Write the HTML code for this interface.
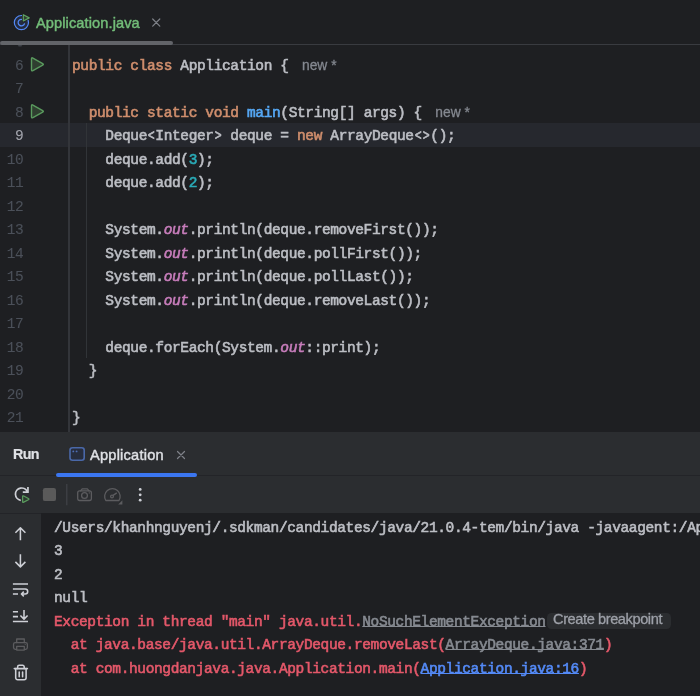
<!DOCTYPE html>
<html>
<head>
<meta charset="utf-8">
<style>
html,body{margin:0;padding:0;}
body{width:700px;height:696px;overflow:hidden;background:#1e1f22;position:relative;font-family:"Liberation Sans",sans-serif;}
.abs{position:absolute;}
#tabborder{left:0;top:44px;width:700px;height:1px;background:#393b40;}
#tabul{left:0px;top:40.5px;width:173.4px;height:4.4px;background:#626469;border-radius:2.2px;}
#tabname{left:36px;top:13.2px;font-size:14.6px;letter-spacing:0.1px;color:#73bd79;line-height:20px;white-space:nowrap;will-change:transform;-webkit-text-stroke:0.45px currentColor;}
#gutsep{left:68.1px;top:45px;width:1.6px;height:387px;background:#33353a;}
#indent{left:86px;top:123px;width:1px;height:235px;background:#313438;}
#caretrow{left:0;top:123px;width:700px;height:23.5px;background:#26282e;}
.mono{will-change:transform;font-family:"Liberation Mono",monospace;font-size:14.5px;letter-spacing:-0.37px;line-height:24px;height:24px;white-space:pre;-webkit-text-stroke:0.6px currentColor;}
.ln{position:absolute;left:0;width:23.4px;text-align:right;color:#4b5059;-webkit-text-stroke:0.1px currentColor;}
.cl{position:absolute;left:72px;color:#bcbec4;}
.ab{display:inline-block;transform:scaleX(0.8);}
.k{color:#cf8e6d;}
.m{color:#56a8f5;}
.n{color:#2aacb8;}
.s{color:#c77dbb;font-style:italic;}
.h{margin-left:13.4px;color:#858991;font-family:"Liberation Sans",sans-serif;font-size:13.8px;letter-spacing:0;-webkit-text-stroke:0.3px currentColor;}
#runpanel{left:0;top:432px;width:700px;height:264px;background:#2b2d30;}
#runborder{left:0;top:475.2px;width:700px;height:1px;background:#232428;}
#console{left:41px;top:512.7px;width:659px;height:184px;background:#1e1f22;}
#runul{left:55.7px;top:472.8px;width:141.4px;height:4px;background:#3b76f1;border-radius:2px;}
.rt{position:absolute;top:444.6px;font-size:14.6px;letter-spacing:0.22px;color:#dfe1e5;line-height:20px;white-space:nowrap;will-change:transform;-webkit-text-stroke:0.4px currentColor;}
#cb{left:546.6px;top:613.2px;width:124px;height:15.7px;background:#2b2d30;border-radius:4.5px;}
#cbt{left:552.9px;top:609.3px;font-size:14.6px;letter-spacing:-0.41px;color:#9da0a8;line-height:20px;white-space:nowrap;will-change:transform;-webkit-text-stroke:0.3px currentColor;}
#conborder{left:0;top:512.6px;width:41px;height:1px;background:#232428;}
svg{position:absolute;left:0;top:0;}
.co{position:absolute;left:53.5px;color:#bcbec4;}
.er{color:#e4586a;}
.lk{color:#548af7;text-decoration:underline;text-decoration-skip-ink:none;text-underline-offset:0.3px;text-decoration-thickness:1.1px;}
.gl{color:#868a91;text-decoration:underline;text-decoration-skip-ink:none;text-underline-offset:0.3px;text-decoration-thickness:1.1px;}
</style>
</head>
<body>
<div class="abs" id="tabborder"></div><div class="abs" id="tabul"></div>
<div class="abs" id="tabname">Application.java</div>
<div class="abs" id="caretrow"></div><div class="abs" id="gutsep"></div><div class="abs" id="indent"></div>
<div class="ln mono" style="top:53.93px">6</div>
<div class="ln mono" style="top:77.43px">7</div>
<div class="ln mono" style="top:100.93px">8</div>
<div class="ln mono" style="top:124.43px;color:#a1a3ab">9</div>
<div class="ln mono" style="top:147.93px">10</div>
<div class="ln mono" style="top:171.43px">11</div>
<div class="ln mono" style="top:194.93px">12</div>
<div class="ln mono" style="top:218.43px">13</div>
<div class="ln mono" style="top:241.93px">14</div>
<div class="ln mono" style="top:265.43px">15</div>
<div class="ln mono" style="top:288.93px">16</div>
<div class="ln mono" style="top:312.43px">17</div>
<div class="ln mono" style="top:335.93px">18</div>
<div class="ln mono" style="top:359.43px">19</div>
<div class="ln mono" style="top:382.93px">20</div>
<div class="ln mono" style="top:406.43px">21</div>
<div class="cl mono" style="top:53.93px"><span class="k">public class</span> Application {<span class="h">new *</span></div>
<div class="cl mono" style="top:100.93px">  <span class="k">public static void</span> <span class="m">main</span>(String[] args) {<span class="h">new *</span></div>
<div class="cl mono" style="top:124.43px">    Deque<span class="ab">&lt;</span>Integer<span class="ab">&gt;</span> deque = <span class="k">new</span> ArrayDeque<span class="ab">&lt;</span><span class="ab">&gt;</span>();</div>
<div class="cl mono" style="top:147.93px">    deque.add(<span class="n">3</span>);</div>
<div class="cl mono" style="top:171.43px">    deque.add(<span class="n">2</span>);</div>
<div class="cl mono" style="top:218.43px">    System.<span class="s">out</span>.println(deque.removeFirst());</div>
<div class="cl mono" style="top:241.93px">    System.<span class="s">out</span>.println(deque.pollFirst());</div>
<div class="cl mono" style="top:265.43px">    System.<span class="s">out</span>.println(deque.pollLast());</div>
<div class="cl mono" style="top:288.93px">    System.<span class="s">out</span>.println(deque.removeLast());</div>
<div class="cl mono" style="top:335.93px">    deque.forEach(System.<span class="s">out</span>::print);</div>
<div class="cl mono" style="top:359.43px">  }</div>
<div class="cl mono" style="top:406.43px">}</div>
<div class="abs" id="runpanel"></div><div class="abs" id="runborder"></div><div class="abs" id="runul"></div>
<div class="rt" style="left:12.7px;top:444.2px;font-weight:bold;font-size:14.3px;letter-spacing:-0.6px;-webkit-text-stroke:0.2px currentColor">Run</div><div class="rt" style="left:89.6px">Application</div>
<div class="abs" id="console"></div><div class="abs" id="conborder"></div>
<div class="abs" id="cb"></div><div class="abs" id="cbt">Create breakpoint</div>
<div class="co mono" style="top:515.7px">/Users/khanhnguyenj/.sdkman/candidates/java/21.0.4-tem/bin/java -javaagent:/Ap</div>
<div class="co mono" style="top:539.2px">3</div>
<div class="co mono" style="top:562.7px">2</div>
<div class="co mono" style="top:586.2px">null</div>
<div class="co mono er" style="top:609.7px">Exception in thread "main" java.util.<span class="gl">NoSuchElementException</span></div>
<div class="co mono er" style="top:633.2px">  at java.base/java.util.ArrayDeque.removeLast(<span class="gl">ArrayDeque.java:371</span>)</div>
<div class="co mono er" style="top:656.7px">  at com.huongdanjava.java.Application.main(<span class="lk">Application.java:16</span>)</div>
<svg width="700" height="696" viewBox="0 0 700 696" fill="none" stroke-linecap="round" stroke-linejoin="round">
<!-- tab class icon -->
<circle cx="21.4" cy="22.6" r="7.1" fill="#242b3f" stroke="#548af7" stroke-width="1.2"/>
<path d="M24.0 20.5 A3.3 3.3 0 1 0 24.5 23.8" stroke="#548af7" stroke-width="1.25"/>
<path d="M23.3 14.7 L23.3 21.0 L29.2 17.85 Z" fill="#1e1f22" stroke="#1e1f22" stroke-width="2.6"/>
<path d="M23.3 14.7 L23.3 21.0 L29.2 17.85 Z" fill="#2f3f30" stroke="#5fa063" stroke-width="1.2"/>
<ellipse cx="20" cy="45.7" rx="2.3" ry="0.8" fill="#4b5059" opacity="0.8"/>
<!-- tab close -->
<path d="M152.7 19 L159.8 26.1 M159.8 19 L152.7 26.1" stroke="#7f8289" stroke-width="1.2"/>
<!-- gutter run icons -->
<path d="M32.90 58.08 Q31.50 57.30 31.50 58.90 L31.50 69.80 Q31.50 71.40 32.90 70.62 L42.70 65.13 Q44.10 64.35 42.70 63.57 Z" fill="#2f3f30" stroke="#5a9a5e" stroke-width="1.4"/>
<path d="M32.90 105.08 Q31.50 104.30 31.50 105.90 L31.50 116.80 Q31.50 118.40 32.90 117.62 L42.70 112.13 Q44.10 111.35 42.70 110.57 Z" fill="#2f3f30" stroke="#5a9a5e" stroke-width="1.4"/>
<!-- run tab icon -->
<rect x="70" y="447.8" width="14.2" height="12.4" rx="2.5" fill="#272d3d" stroke="#4a68a8" stroke-width="1.6"/>
<circle cx="73.3" cy="451.4" r="0.95" fill="#4e6db5"/><circle cx="76.6" cy="451.4" r="0.95" fill="#4e6db5"/>
<!-- run tab close -->
<path d="M177.5 451.5 L184.5 458.5 M184.5 451.5 L177.5 458.5" stroke="#7f8289" stroke-width="1.2"/>
<!-- rerun -->
<path d="M20.74 500.29 A6.15 6.15 0 1 1 27.38 492.1" stroke="#ced0d6" stroke-width="1.7" stroke-linecap="butt"/>
<path d="M27.95 487.1 L27.95 492.05 L22.8 492.05" stroke="#ced0d6" stroke-width="1.7" stroke-linecap="butt" stroke-linejoin="miter"/>
<path d="M23.75 496.01 Q22.60 495.40 22.60 496.70 L22.60 501.50 Q22.60 502.80 23.75 502.19 L28.35 499.71 Q29.50 499.10 28.35 498.49 Z" fill="#2b2d30" stroke="#2b2d30" stroke-width="3.2"/>
<path d="M23.75 496.01 Q22.60 495.40 22.60 496.70 L22.60 501.50 Q22.60 502.80 23.75 502.19 L28.35 499.71 Q29.50 499.10 28.35 498.49 Z" fill="#2c3a2e" stroke="#5a9a5e" stroke-width="1.3"/>
<!-- stop -->
<rect x="42.9" y="488" width="13.1" height="13.1" rx="2.2" fill="#5a5a5a"/>
<!-- separator -->
<path d="M66.8 484 L66.8 505.2" stroke="#43454a" stroke-width="1.1" stroke-linecap="butt"/>
<!-- camera -->
<g stroke="#5c5c5f" stroke-width="1.3">
<path d="M80.6 490.9 L82.2 488.9 L87.4 488.9 L89 490.9"/>
<rect x="77.7" y="490.9" width="13.7" height="9.6" rx="1.9"/>
<circle cx="84.5" cy="495.5" r="2.9"/>
</g>
<circle cx="89.3" cy="492.9" r="0.7" fill="#5c5c5f"/>
<!-- gauge -->
<g stroke="#5c5c5f" stroke-width="1.3">
<path d="M105.82 500.5 A7.75 7.75 0 1 1 118.98 500.5 Z"/>
<circle cx="112" cy="496.5" r="1.4"/>
<path d="M113.1 495.4 L116.4 493.1"/>
</g>
<path d="M122.4 500.2 L122.4 504.4 L118.2 504.4 Z" fill="#5c5c5f"/>
<!-- more -->
<circle cx="140.2" cy="489.4" r="1.4" fill="#ced0d6"/><circle cx="140.2" cy="494.8" r="1.4" fill="#ced0d6"/><circle cx="140.2" cy="500.2" r="1.4" fill="#ced0d6"/>
<!-- sidebar -->
<g stroke="#ced0d6" stroke-width="1.55" stroke-linecap="butt">
<path d="M20.4 527.6 L20.4 540.3 M15.4 532.8 L20.4 527.8 L25.4 532.8"/>
<path d="M20.4 554.2 L20.4 567 M15.4 561.9 L20.4 566.9 L25.4 561.9"/>
<path d="M12.9 584 L28 584 M12.9 589 L25.2 589 A2.5 2.5 0 0 1 25.2 594 L21.6 594 M23.8 591.6 L21.4 594 L23.8 596.4 M12.9 594 L18 594"/>
<path d="M12.9 611.8 L18 611.8 M12.9 616.6 L18 616.6 M24 610 L24 619 M20.4 615.5 L24 619.1 L27.6 615.5 M12.9 621.4 L28 621.4"/>
</g>
<!-- print -->
<g stroke="#5c5c5f" stroke-width="1.3">
<path d="M16.7 642.6 L16.7 639 L24.3 639 L24.3 642.6"/>
<rect x="13.55" y="642.6" width="13.8" height="6.7" rx="1.7"/>
<rect x="16.7" y="646.3" width="7.6" height="3.8" fill="#2b2d30"/>
</g>
<circle cx="25.2" cy="644.6" r="0.6" fill="#5c5c5f"/>
<!-- trash -->
<g stroke="#ced0d6" stroke-width="1.55" transform="translate(0.4,0.3)">
<path d="M13.9 668.3 L27 668.3"/>
<path d="M17.2 668.3 L17.2 666.6 A1.6 1.6 0 0 1 18.8 665 L22.2 665 A1.6 1.6 0 0 1 23.8 666.6 L23.8 668.3"/>
<path d="M15.3 668.3 L15.3 677.4 A2 2 0 0 0 17.3 679.4 L23.7 679.4 A2 2 0 0 0 25.7 677.4 L25.7 668.3"/>
<path d="M18.8 671.8 L18.8 676.4 M22.2 671.8 L22.2 676.4"/>
</g>
</svg>
</body>
</html>
